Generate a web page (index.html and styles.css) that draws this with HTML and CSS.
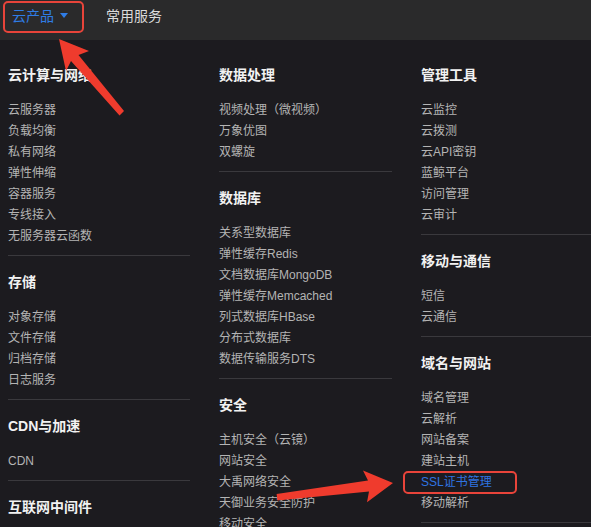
FILE: index.html
```html
<!DOCTYPE html>
<html lang="zh-CN">
<head>
    <meta charset="UTF-8">
    <meta name="viewport" content="width=device-width, initial-scale=1.0">
    <title>云产品</title>
    <link rel="stylesheet" href="styles.css">
</head>
<body>
    <div class="topbar">
        <div class="nav-item is-active marked">云产品<svg class="caret" width="8" height="5" viewBox="0 0 8 5"><path d="M0 0H8L4 5Z" fill="#2f7de6"/></svg></div>
        <div class="nav-item">常用服务</div>
    </div>

    <div class="menu">
        <div class="column">
            <div class="section">
                <div class="title">云计算与网络</div>
                <div class="item">云服务器</div>
                <div class="item">负载均衡</div>
                <div class="item">私有网络</div>
                <div class="item">弹性伸缩</div>
                <div class="item">容器服务</div>
                <div class="item">专线接入</div>
                <div class="item">无服务器云函数</div>
            </div>
            <div class="section">
                <div class="title">存储</div>
                <div class="item">对象存储</div>
                <div class="item">文件存储</div>
                <div class="item">归档存储</div>
                <div class="item">日志服务</div>
            </div>
            <div class="section">
                <div class="title">CDN与加速</div>
                <div class="item">CDN</div>
            </div>
            <div class="section">
                <div class="title">互联网中间件</div>
            </div>
        </div>

        <div class="column">
            <div class="section">
                <div class="title">数据处理</div>
                <div class="item">视频处理（微视频）</div>
                <div class="item">万象优图</div>
                <div class="item">双螺旋</div>
            </div>
            <div class="section">
                <div class="title">数据库</div>
                <div class="item">关系型数据库</div>
                <div class="item">弹性缓存Redis</div>
                <div class="item">文档数据库MongoDB</div>
                <div class="item">弹性缓存Memcached</div>
                <div class="item">列式数据库HBase</div>
                <div class="item">分布式数据库</div>
                <div class="item">数据传输服务DTS</div>
            </div>
            <div class="section">
                <div class="title">安全</div>
                <div class="item">主机安全（云镜）</div>
                <div class="item">网站安全</div>
                <div class="item">大禹网络安全</div>
                <div class="item">天御业务安全防护</div>
                <div class="item">移动安全</div>
            </div>
        </div>

        <div class="column">
            <div class="section">
                <div class="title">管理工具</div>
                <div class="item">云监控</div>
                <div class="item">云拨测</div>
                <div class="item">云API密钥</div>
                <div class="item">蓝鲸平台</div>
                <div class="item">访问管理</div>
                <div class="item">云审计</div>
            </div>
            <div class="section">
                <div class="title">移动与通信</div>
                <div class="item">短信</div>
                <div class="item">云通信</div>
            </div>
            <div class="section section-last">
                <div class="title">域名与网站</div>
                <div class="item">域名管理</div>
                <div class="item">云解析</div>
                <div class="item">网站备案</div>
                <div class="item">建站主机</div>
                <div class="item is-active marked-item">SSL证书管理</div>
                <div class="item">移动解析</div>
            </div>
        </div>
    </div>

    <!-- 标注箭头 -->
    <svg class="arrows" width="591" height="527" viewBox="0 0 591 527">
        <polygon fill="#ef3b2d" points="59,39 89,51 78.5,55 124,111 119.5,115.5 71,61 66,71"/>
        <polygon fill="#ef3b2d" points="393,483 363,470.4 368,480.6 276.6,494 277.4,500.5 369,491.6 367,502.2"/>
    </svg>
</body>
</html>
```

FILE: styles.css
```css
* {
    margin: 0;
    padding: 0;
    box-sizing: border-box;
}

body {
    width: 591px;
    height: 527px;
    overflow: hidden;
    background-color: #1c1b1f;
    font-family: "Liberation Sans", "Noto Sans CJK SC", sans-serif;
    color: #b4b4b4;
    position: relative;
}

.topbar {
    height: 40px;
    background-color: #2a2a2b;
    display: flex;
    align-items: flex-start;
    gap: 38px;
    padding-left: 12px;
}

.nav-item {
    display: flex;
    align-items: center;
    gap: 6px;
    height: 30px;
    font-size: 14px;
    color: #dcdcdc;
    position: relative;
}

.nav-item.is-active {
    color: #2f7de6;
}

.caret {
    display: block;
}

.marked::after {
    content: "";
    position: absolute;
    top: 1px;
    left: -9px;
    right: -16px;
    bottom: -3px;
    border: 2px solid #e8443a;
    border-radius: 5px;
}

.menu {
    display: grid;
    grid-template-columns: 182px 173px 1fr;
    column-gap: 29px;
    padding: 9px 0 0 8px;
}

.section {
    padding: 16px 0 8px;
}

.section + .section {
    border-top: 1px solid #3a393d;
}

.section-last {
    border-bottom: 1px solid #3a393d;
}

.title {
    font-size: 14px;
    line-height: 20px;
    font-weight: bold;
    color: #f2f2f2;
    margin-bottom: 15px;
    white-space: nowrap;
}

.item {
    font-size: 12px;
    line-height: 21px;
    color: #b4b4b4;
    white-space: nowrap;
}

.item.is-active {
    color: #2f74e2;
}

.marked-item {
    position: relative;
}

.marked-item::after {
    content: "";
    position: absolute;
    top: -1px;
    left: -18px;
    width: 110px;
    bottom: -1px;
    border: 2px solid #e8443a;
    border-radius: 5px;
}

.arrows {
    position: absolute;
    top: 0;
    left: 0;
    pointer-events: none;
}
```
